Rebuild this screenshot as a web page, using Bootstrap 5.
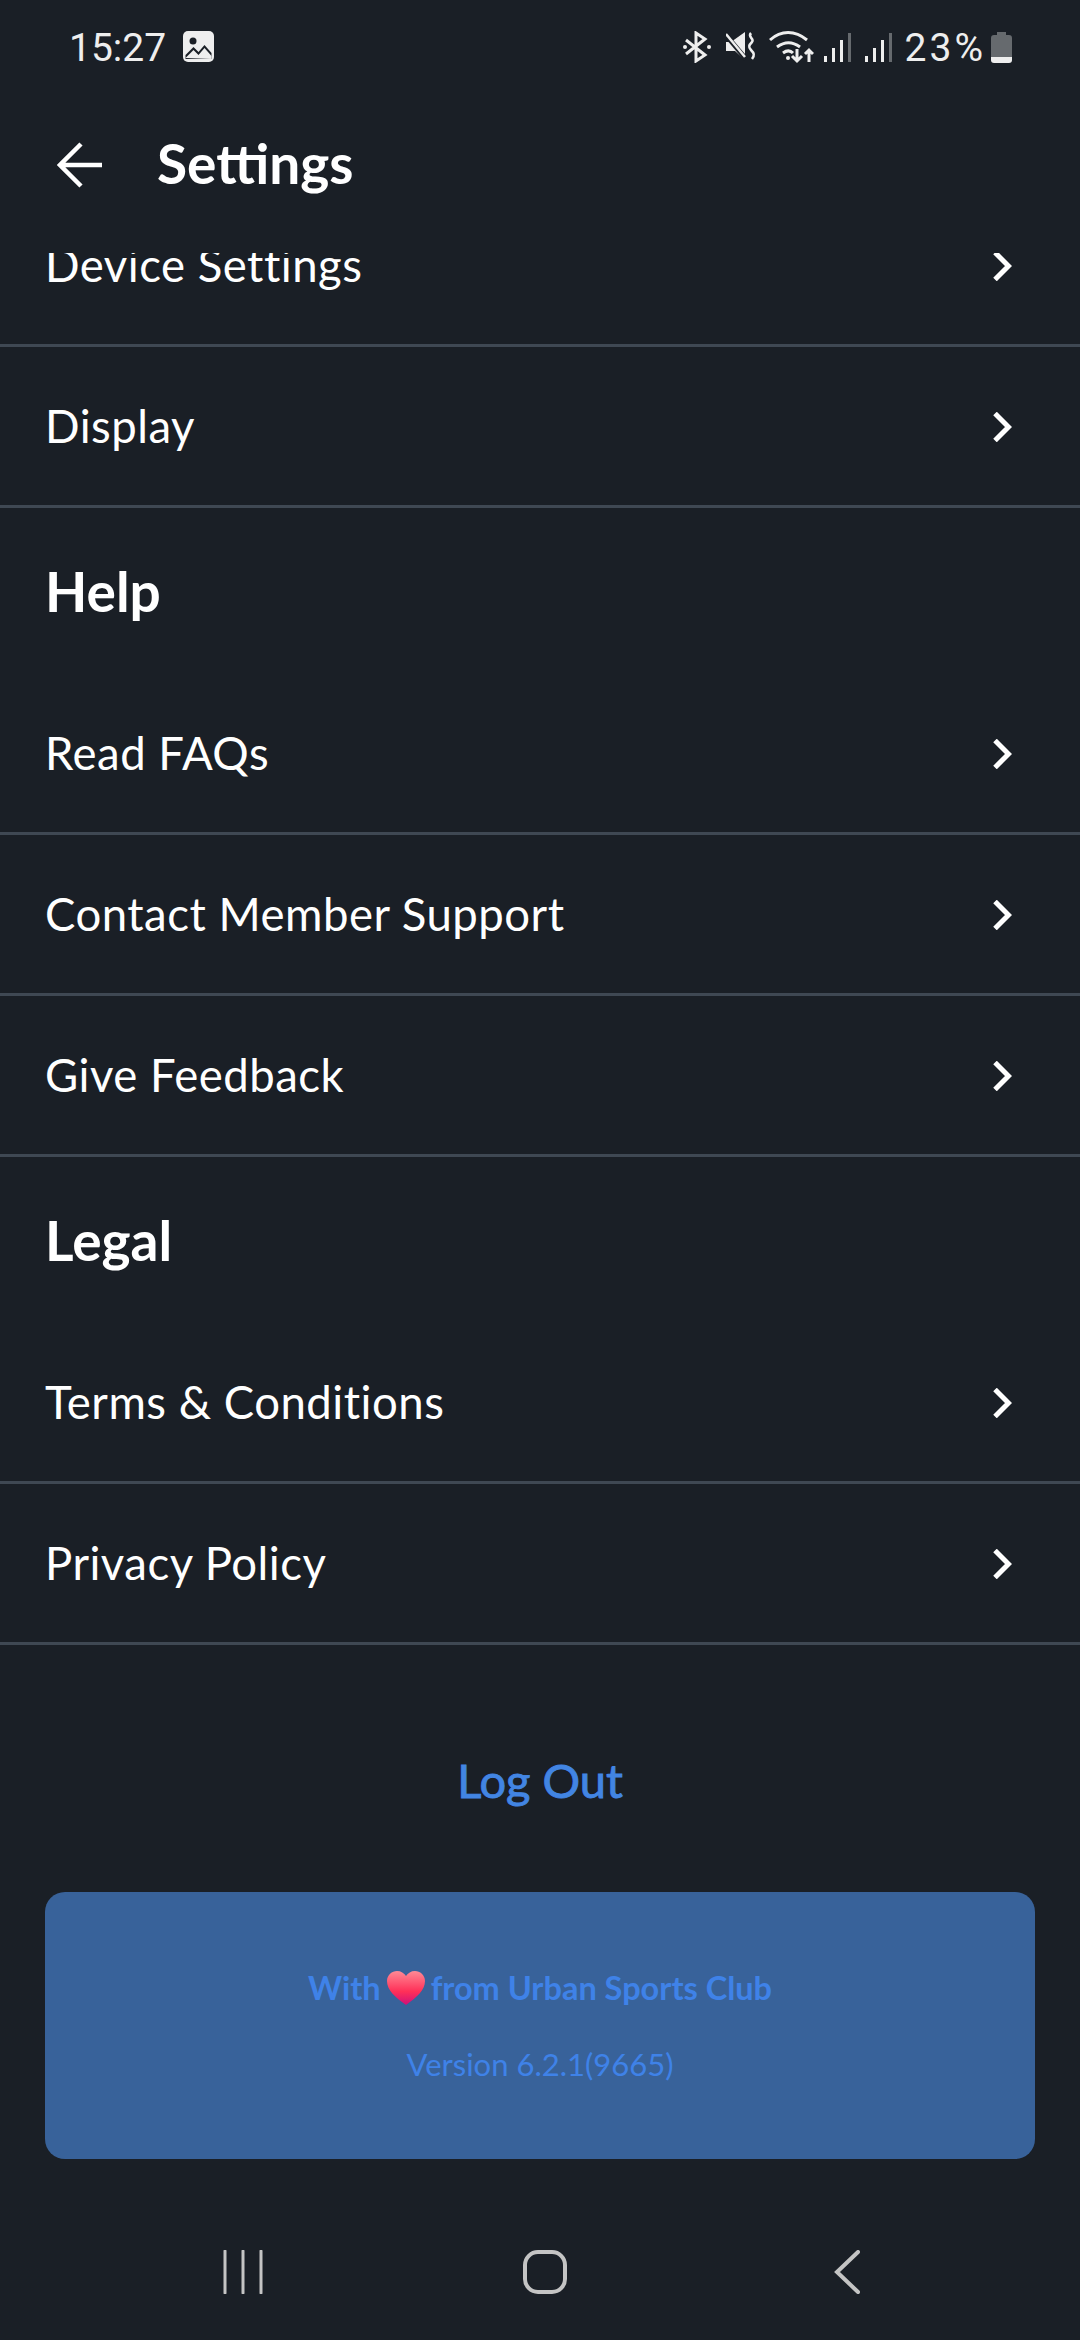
<!DOCTYPE html>
<html lang="en"><head><meta charset="utf-8"><title>Settings</title>
<link rel="stylesheet" href="https://cdn.jsdelivr.net/npm/bootstrap@5.3.0/dist/css/bootstrap.min.css">
<style>
html,body{margin:0;height:2340px;width:1080px;overflow:hidden;background:#1a1f26;color:#fff;font-family:"Lato","Liberation Sans",sans-serif}
.screen{height:2340px}
.statusbar{height:77px;padding:31px 68px 0 69px;font-family:"Roboto",sans-serif;font-weight:400;font-size:39px;line-height:34px;color:#eee}
.statusbar svg{display:block;flex:none}
.pct{letter-spacing:3px;margin-left:13px}
.imgicon{margin-left:17px}
.gap-mute{margin-left:15px}
.gap-wifi{margin-left:13px}
.gap-sigone{margin:2px 0 0 10px}
.gap-sigtwo{margin:2px 0 0 14px}
.gap-batt{margin:1px 0 0 5px}
.topbar{height:176px;padding-left:57px}
.topbar h1{font-size:55px;font-weight:700;margin:0 0 3px 54px;line-height:1}
.scrollarea{overflow:hidden;min-height:0}
.setlist{margin-top:-67px}
.setrow{height:161px;padding:0 68px 0 45px;border-bottom:3px solid #3f4853;font-size:45.5px;letter-spacing:.5px;background:transparent;color:#fff;text-decoration:none}
.setrow svg{margin-top:1px}
.sechead{height:166px;padding-left:45px;font-size:55px;font-weight:700;margin:0}
.logout{height:247px;padding-top:107px;font-size:47px;line-height:1.2;color:#4285e3;-webkit-text-stroke:.9px #4285e3;text-decoration:none}
.infocard{margin:0 45px;height:267px;background:#38629a;border:0;border-radius:20px;color:#3f82e8}
.infocard p{margin:0;line-height:1}
.lineone{font-size:32.5px;font-weight:700;margin-bottom:44px!important;gap:6px}
.linetwo{font-size:31px}
.navrow{height:180px;padding:91px 0 0 10px}
.navcell{width:302px}
</style></head>
<body>
<div class="screen d-flex flex-column">
 <div class="statusbar d-flex align-items-start">
  <span>15:27</span>
  <svg class="imgicon" width="31" height="31" viewBox="0 0 31 31" aria-hidden="true"><rect width="31" height="31" rx="5" fill="#eee"/><path d="M2.500 24l8-8 5 5 6-7 7 8v6H2.500z" fill="#1a1f26"/><path d="M2.500 27l8-8 5 5 6-7 7 8v3z" fill="#eee"/><circle cx="10" cy="10" r="3.500" fill="#1a1f26"/></svg>
  <div class="ms-auto d-flex align-items-start">
   <svg width="28" height="32" viewBox="0 0 28 32" aria-hidden="true"><path d="M3 9l19 15-9 6V2l9 6L3 23" fill="none" stroke="#eee" stroke-width="3"/><circle cx="2" cy="16" r="2" fill="#eee"/><circle cx="26" cy="16" r="2" fill="#eee"/></svg>
   <svg class="gap-mute" width="30" height="30" viewBox="0 0 30 30" aria-hidden="true"><path d="M0 11h5L19 1v28L9 20H0z" fill="#eee"/><path d="M-1 3l21 25" stroke="#1a1f26" stroke-width="5"/><path d="M0 3l19 23" stroke="#eee" stroke-width="2.500"/><path d="M25 2c-4 4 4 6 1 9s-4 5-1 8 4 5 1 9" fill="none" stroke="#eee" stroke-width="2.500"/></svg>
   <svg class="gap-wifi" width="45" height="33" viewBox="0 0 45 33" aria-hidden="true"><g fill="none" stroke="#eee" stroke-width="3"><path d="M1 9c11-10 25-10 37 0M8 16c8-6 15-6 23 0M14 22c4-3 7-3 10 0"/><path d="M28 18v12m-5-5l5 5 5-5M40 31V19m-4 4l4-4 4 4"/></g><circle cx="19" cy="27" r="2" fill="#eee"/></svg>
   <svg class="gap-sigone" width="27" height="29" viewBox="0 0 27 29" aria-hidden="true"><rect y="23" width="3" height="6" fill="#eee"/><rect x="8" y="15" width="3" height="14" fill="#eee"/><rect x="16" y="7" width="3" height="22" fill="#eee"/><rect x="24" width="3" height="29" fill="#666a6e"/></svg>
   <svg class="gap-sigtwo" width="27" height="29" viewBox="0 0 27 29" aria-hidden="true"><rect y="23" width="3" height="6" fill="#eee"/><rect x="8" y="15" width="3" height="14" fill="#eee"/><rect x="16" y="7" width="3" height="22" fill="#eee"/><rect x="24" width="3" height="29" fill="#666a6e"/></svg>
   <span class="pct">23%</span>
   <svg class="gap-batt" width="21" height="31" viewBox="0 0 21 31" aria-hidden="true"><path d="M6 0h9v3h3a3 3 0 0 1 3 3v19H0V6a3 3 0 0 1 3-3h3z" fill="#666a6e"/><path d="M0 25h21v3a3 3 0 0 1-3 3H3a3 3 0 0 1-3-3z" fill="#eee"/></svg>
  </div>
 </div>
 <div class="topbar d-flex align-items-center">
  <svg width="46" height="46" viewBox="0 0 46 46" aria-hidden="true"><path d="M45 23H3M24 2L3 23l21 21" fill="none" stroke="#fff" stroke-width="4.500"/></svg>
  <h1>Settings</h1>
 </div>
 <div class="scrollarea flex-grow-1">
  <div class="setlist">
   <a class="setrow d-flex align-items-center justify-content-between" href="#">Device Settings<svg width="22" height="30" viewBox="0 0 22 30" aria-hidden="true"><path d="M5 1.500L18.500 15 5 28.500" fill="none" stroke="#fff" stroke-width="5"/></svg></a>
   <a class="setrow d-flex align-items-center justify-content-between" href="#">Display<svg width="22" height="30" viewBox="0 0 22 30" aria-hidden="true"><path d="M5 1.500L18.500 15 5 28.500" fill="none" stroke="#fff" stroke-width="5"/></svg></a>
  </div>
  <h2 class="sechead d-flex align-items-center">Help</h2>
  <div>
   <a class="setrow d-flex align-items-center justify-content-between" href="#">Read FAQs<svg width="22" height="30" viewBox="0 0 22 30" aria-hidden="true"><path d="M5 1.500L18.500 15 5 28.500" fill="none" stroke="#fff" stroke-width="5"/></svg></a>
   <a class="setrow d-flex align-items-center justify-content-between" href="#">Contact Member Support<svg width="22" height="30" viewBox="0 0 22 30" aria-hidden="true"><path d="M5 1.500L18.500 15 5 28.500" fill="none" stroke="#fff" stroke-width="5"/></svg></a>
   <a class="setrow d-flex align-items-center justify-content-between" href="#">Give Feedback<svg width="22" height="30" viewBox="0 0 22 30" aria-hidden="true"><path d="M5 1.500L18.500 15 5 28.500" fill="none" stroke="#fff" stroke-width="5"/></svg></a>
  </div>
  <h2 class="sechead d-flex align-items-center">Legal</h2>
  <div>
   <a class="setrow d-flex align-items-center justify-content-between" href="#">Terms &amp; Conditions<svg width="22" height="30" viewBox="0 0 22 30" aria-hidden="true"><path d="M5 1.500L18.500 15 5 28.500" fill="none" stroke="#fff" stroke-width="5"/></svg></a>
   <a class="setrow d-flex align-items-center justify-content-between" href="#">Privacy Policy<svg width="22" height="30" viewBox="0 0 22 30" aria-hidden="true"><path d="M5 1.500L18.500 15 5 28.500" fill="none" stroke="#fff" stroke-width="5"/></svg></a>
  </div>
  <a class="logout d-block text-center" href="#">Log Out</a>
  <div class="card infocard d-flex flex-column justify-content-center align-items-center">
   <p class="lineone d-flex align-items-center">With <svg width="38" height="34" viewBox="0 0 38 34" aria-hidden="true"><defs><linearGradient id="hg" x1="0" y1="0" x2="0" y2="1"><stop offset="0" stop-color="#ff8a95"/><stop offset=".6" stop-color="#ff3058"/><stop offset="1" stop-color="#d0107a"/></linearGradient></defs><path d="M19 34C8 26 0 19 0 10 0 4 5 0 10 0c4 0 7 2 9 5 2-3 5-5 9-5 5 0 10 4 10 10 0 9-8 16-19 24z" fill="url(#hg)"/></svg> from Urban Sports Club</p>
   <p class="linetwo">Version 6.2.1(9665)</p>
  </div>
  <div class="navrow d-flex align-items-start justify-content-center">
   <div class="navcell d-flex justify-content-center"><svg width="40" height="44" viewBox="0 0 40 44" aria-hidden="true"><path d="M2 1v42M20 1v42M38 1v42" stroke="#c4c4c4" stroke-width="3" stroke-linecap="round"/></svg></div>
   <div class="navcell d-flex justify-content-center"><svg width="44" height="44" viewBox="0 0 44 44" aria-hidden="true"><rect x="2" y="2" width="40" height="40" rx="13" fill="none" stroke="#c4c4c4" stroke-width="4"/></svg></div>
   <div class="navcell d-flex justify-content-center"><svg width="26" height="44" viewBox="0 0 26 44" aria-hidden="true"><path d="M24 2L3 22l21 20" fill="none" stroke="#c4c4c4" stroke-width="4" stroke-linecap="round"/></svg></div>
  </div>
 </div>
</div>
<script src="https://cdn.jsdelivr.net/npm/bootstrap@5.3.0/dist/js/bootstrap.bundle.min.js"></script>
</body></html>
